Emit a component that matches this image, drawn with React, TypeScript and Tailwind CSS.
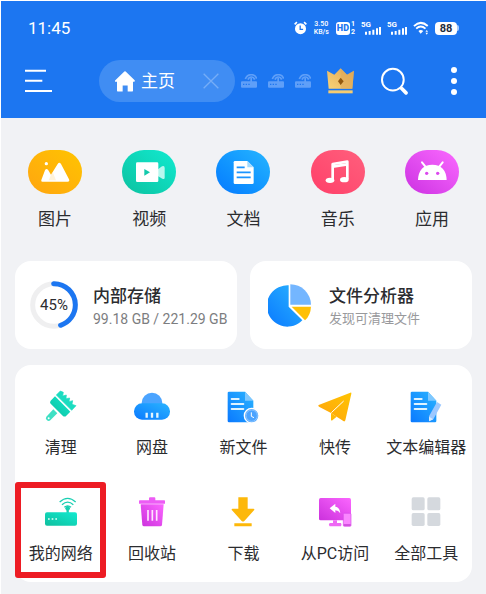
import type { ReactNode } from "react";

type ArtProps = { box: string; className: string; children: ReactNode };

function Art({ box, className, children }: ArtProps) {
  return (
    <svg viewBox={box} className={className} aria-hidden="true" fill="none">
      {children}
    </svg>
  );
}

function Gradients() {
  const stops: [string, string, string][] = [
    ["blue", "#0a79ff", "#2ab4ff"],
    ["teal", "#0fbf9e", "#12ead0"],
    ["amber", "#ffa30f", "#ffc400"],
    ["violet", "#cb31dc", "#fb66ff"],
    ["gold", "#f9d477", "#dea656"],
  ];
  return (
    <svg width="0" height="0" className="absolute" aria-hidden="true">
      <defs>
        {stops.map(([id, from, to]) => (
          <linearGradient key={id} id={id} x1="0" y1="1" x2="1" y2="0">
            <stop offset="0" stopColor={from} />
            <stop offset="1" stopColor={to} />
          </linearGradient>
        ))}
      </defs>
    </svg>
  );
}

function RouterTab() {
  return (
    <button aria-label="网络标签" className="text-[#5f9ff8]">
      <Art box="0 0 48 42" className="h-[14px] w-4">
        <path d="M3 22H28V12H33V22H45Q48 22 48 25V38Q48 41 45 41H3Q0 41 0 38V25Q0 22 3 22Z" fill="currentColor" />
        <path d="M13 15Q18 2 31 2Q43 2 47 14M21 17Q24 9 31 9Q38 9 41 17" stroke="currentColor" strokeWidth="5" />
        <path d="M6 31H10M14 31H18M22 31H26" stroke="#1c76f1" strokeWidth="4" />
      </Art>
    </button>
  );
}

function Signal() {
  return (
    <span className="flex h-[14px] w-5">
      <span className="text-[8px] leading-[8px] font-bold">5G</span>
      <Art box="0 0 48 42" className="-ml-[6px] h-[14px] w-4 shrink-0">
        <path d="M3 41V32M14 41V30M25 41V26M36 41V22M45 41V18" stroke="#fff" strokeWidth="6" />
      </Art>
    </span>
  );
}

function StatusBar() {
  return (
    <div className="flex h-[54px] items-center justify-between pr-[27px] pl-[27px]">
      <span className="text-[17px] leading-6">11:45</span>
      <div className="flex items-center gap-[6px]">
        <Art box="0 0 40 42" className="h-[14px] w-[13px]">
          <circle cx="20" cy="23" r="17" fill="#fff" />
          <path d="M2 10L9 3M31 3L38 10" stroke="#fff" strokeWidth="5" />
          <path d="M19 13V25H28" stroke="#1c76f1" strokeWidth="4" />
        </Art>
        <span className="flex w-[17px] flex-col items-center text-[7px] leading-[8px] font-medium">
          <span>3.50</span>
          <span>KB/s</span>
        </span>
        <span className="flex items-center gap-px">
          <span className="h-[13px] rounded-[3px] bg-white px-px text-[9px] leading-[13px] font-black text-[#1c76f1]">HD</span>
          <span className="flex flex-col text-[7px] leading-[8px] font-bold">
            <span>1</span>
            <span>2</span>
          </span>
        </span>
        <Signal />
        <Signal />
        <Art box="0 0 50 42" className="h-[14px] w-4">
          <path d="M3 15Q24 -5 46 15M10 23Q24 10 39 23" stroke="#fff" strokeWidth="6" />
          <path d="M17 30Q24 24 32 30L24 39Z" fill="#fff" />
          <path d="M39 33L43 27L47 33ZM39 36L43 42L47 36Z" fill="#fff" />
        </Art>
        <span className="flex items-center">
          <span className="h-[13px] w-[22px] rounded-[4px] bg-white text-center text-[11px] leading-[13px] font-bold text-[#1f2d40]">88</span>
          <span className="h-[6px] w-[2px] rounded-r-[2px] bg-[#a8cbfb]" />
        </span>
      </div>
    </div>
  );
}

function Toolbar() {
  return (
    <nav className="flex h-[52px] items-center justify-between pr-[29px] pl-6">
      <div className="flex items-center">
        <button aria-label="菜单">
          <Art box="75 208 81 72" className="h-6 w-[27px]">
            <path d="M75 213H138M75 243H127M75 274H156" stroke="#fff" strokeWidth="6" />
          </Art>
        </button>
        <div className="ml-[47px] flex h-[42px] w-[136px] items-center rounded-full bg-[#408df3] pr-4 pl-4">
          <Art box="343 211 60 62" className="h-[21px] w-5">
            <path d="M371 212Q373 210 375 212L402 238Q404 242 400 243H397V270Q397 272 395 272H381V254H366V272H351Q349 272 349 270V243H345Q341 242 344 238Z" fill="#fff" />
          </Art>
          <span className="ml-[6px] text-[17px] leading-6">主页</span>
          <button aria-label="关闭标签" className="ml-auto">
            <Art box="610 220 48 48" className="h-4 w-4">
              <path d="M612 222L656 266M656 222L612 266" stroke="#75adf7" strokeWidth="4" />
            </Art>
          </button>
        </div>
        <div className="ml-[6px] flex gap-[11px]">
          <RouterTab />
          <RouterTab />
          <RouterTab />
        </div>
      </div>
      <div className="flex items-center">
        <button aria-label="会员">
          <Art box="252 200 81 78" className="h-[26px] w-[27px]">
            <path d="M252 208L274 220L293 201L312 220L333 208L328 262H257Z" fill="url(#gold)" />
            <path d="M293 202L312 220L333 208L328 262H293Z" fill="#dfa858" opacity=".55" />
            <path d="M256 267H329V276H256Z" fill="#f6cc70" />
            <path d="M293 229L302 240L293 251L285 240Z" fill="#94590e" />
          </Art>
        </button>
        <button aria-label="搜索" className="ml-[27px]">
          <Art box="413 200 82 84" className="h-7 w-[27px]">
            <circle cx="449" cy="238" r="33" stroke="#fff" strokeWidth="6" />
            <path d="M472 261L477 266" stroke="#fff" strokeWidth="6" />
            <path d="M476 265L489 278" stroke="#fff" strokeWidth="11" strokeLinecap="round" />
          </Art>
        </button>
        <button aria-label="更多" className="ml-[43px] flex flex-col gap-[5px]">
          <span className="h-[6px] w-[6px] rounded-full bg-white" />
          <span className="h-[6px] w-[6px] rounded-full bg-white" />
          <span className="h-[6px] w-[6px] rounded-full bg-white" />
        </button>
      </div>
    </nav>
  );
}

const categories = [
  {
    label: "图片",
    fill: "from-[#ffa50f] to-[#ffc400]",
    box: "84 60 162 132",
    art: (
      <>
        <path d="M124 150L135 121Q139 113 145 121L153 134L173 102Q178 94 183 102L207 148Q210 155 203 155H127Q122 155 124 150Z" fill="#fff" />
        <path d="M153 134L158 126L168 151H146Z" fill="#ffe7b8" opacity=".5" />
        <circle cx="139" cy="101" r="5" fill="#fff" />
      </>
    ),
  },
  {
    label: "视频",
    fill: "from-[#0cc2a0] to-[#12ead0]",
    box: "366 60 162 132",
    art: (
      <>
        <path d="M472 119L486 109Q494 106 494 113V143Q494 149 487 146L472 137Z" fill="#b9f7ee" />
        <rect x="408" y="97" width="67" height="59" rx="4" fill="#fff" />
        <path d="M433 117L450 127L433 137Z" fill="#13c9ac" />
      </>
    ),
  },
  {
    label: "文档",
    fill: "from-[#0a79ff] to-[#27b5ff]",
    box: "649 60 162 132",
    art: (
      <>
        <path d="M706 93H743L762 112V158Q762 162 758 162H706Q702 162 702 158V97Q702 93 706 93Z" fill="#fff" />
        <path d="M743 93L762 112H743Z" fill="#a4dbff" />
        <path d="M711 112H735M711 127H753M711 142H753" stroke="#1b94ff" strokeWidth="5" />
      </>
    ),
  },
  {
    label: "音乐",
    fill: "from-[#ff3e69] to-[#ff5f7d]",
    box: "204 60 162 132",
    art: (
      <>
        <path d="M269 150V102L313 95V148" stroke="#fff" strokeWidth="8" strokeLinejoin="round" />
        <path d="M269 110L313 103" stroke="#fff" strokeWidth="8" />
        <ellipse cx="261" cy="151" rx="13" ry="8" fill="#fff" />
        <ellipse cx="304" cy="149" rx="13" ry="8" fill="#fff" />
      </>
    ),
  },
  {
    label: "应用",
    fill: "from-[#cc2fe2] to-[#fb68ff]",
    box: "486 60 162 132",
    art: (
      <>
        <path d="M525 150Q527 105 568 104Q609 105 611 150Z" fill="#fff" />
        <path d="M537 97L549 112M599 97L587 112" stroke="#fff" strokeWidth="6" strokeLinecap="round" />
        <circle cx="551" cy="130" r="5" fill="#db48ee" />
        <circle cx="584" cy="130" r="5" fill="#db48ee" />
      </>
    ),
  },
];

const doc = (
  <>
    <path d="M515 64H563L588 91V152Q588 156 584 156H515Q511 156 511 152V68Q511 64 515 64Z" fill="url(#blue)" />
    <path d="M563 64L588 91H563Z" fill="#7fc8ff" />
    <path d="M523 86H544M523 101H558M523 116H558" stroke="#dff3ff" strokeWidth="6" strokeLinecap="round" />
  </>
);

const tools = [
  {
    label: "清理",
    box: "132 50 108 108",
    art: (
      <>
        <path d="M163 114L175 126L154 147Q149 151 144 147Q138 142 142 136Z" fill="#3fe0c4" />
        <circle cx="149" cy="141" r="3" fill="#fff" />
        <path d="M168 75L214 121L202 133Q197 138 191 133L155 97Q151 92 155 88Z" fill="url(#teal)" />
        <path d="M172 71L184 59L193 63L191 74L202 71L201 82L212 80L210 91L221 88L219 99L231 103L218 117Z" fill="#1bdcc0" stroke="#1bdcc0" strokeLinejoin="round" strokeWidth="2" />
      </>
    ),
  },
  {
    label: "网盘",
    box: "402 53 108 108",
    art: (
      <>
        <circle cx="456" cy="98" r="31" fill="#4ba4ff" />
        <rect x="402" y="99" width="108" height="49" rx="24" fill="url(#blue)" />
        <path d="M440 127V142M456 127V142M472 127V142" stroke="#e4f5ff" strokeWidth="7" />
      </>
    ),
  },
  {
    label: "新文件",
    box: "503 53 108 108",
    art: (
      <>
        {doc}
        <circle cx="583" cy="136" r="22" fill="#55a9ff" stroke="#fff" strokeWidth="4" />
        <circle cx="583" cy="136" r="17" fill="#4ba3ff" stroke="#a6d3ff" strokeWidth="2" />
        <path d="M582 126V138L590 142" stroke="#fff" strokeWidth="3" />
      </>
    ),
  },
  {
    label: "快传",
    box: "222 56 108 108",
    art: (
      <>
        <path d="M227 107L322 70Q326 69 325 73L307 153Q305 158 301 155L281 142L264 131L228 112Q224 109 227 107Z" fill="url(#amber)" />
        <path d="M264 131V151Q265 156 269 152L281 142Z" fill="#ffba0a" />
        <path d="M302 95L265 130" stroke="#fff" strokeWidth="3" />
      </>
    ),
  },
  {
    label: "文本编辑器",
    box: "503 53 108 108",
    art: (
      <>
        {doc}
        <path d="M590 95L603 103L579 147L566 153V138Z" fill="#9dc8ff" />
        <path d="M566 139L579 147L566 153Z" fill="#d6ebff" />
      </>
    ),
  },
  {
    label: "我的网络",
    marked: true,
    box: "126 56 108 108",
    art: (
      <>
        <path d="M176 80Q200 58 224 80M183 88Q200 73 217 88M190 96Q200 87 210 96" stroke="#19cfb2" strokeWidth="4" />
        <circle cx="200" cy="99" r="7" fill="#19cfb2" />
        <path d="M200 99V114" stroke="#19cfb2" strokeWidth="7" />
        <rect x="132" y="111" width="96" height="40" rx="6" fill="url(#teal)" />
        <path d="M141 131H146M152 131H157M163 131H168" stroke="#e5fffa" strokeWidth="4" />
      </>
    ),
  },
  {
    label: "回收站",
    box: "402 56 108 108",
    art: (
      <>
        <path d="M419 75H447V69Q447 66 450 66H463Q466 66 466 69V75H493Q495 75 495 77V85H417V77Q417 75 419 75Z" fill="#ed5cf5" />
        <path d="M422 87H491L486 149Q485 153 481 153H432Q428 153 427 149Z" fill="url(#violet)" />
        <path d="M444 104V136M457 104V136M470 104V136" stroke="#ffe4ff" strokeWidth="5" />
      </>
    ),
  },
  {
    label: "下载",
    box: "677 56 108 108",
    art: (
      <path d="M717 66H745V100H763Q767 102 764 105L735 137Q731 140 727 137L698 105Q695 102 699 100H717ZM705 144H757V153H705Z" fill="#fdb80a" />
    ),
  },
  {
    label: "从PC访问",
    box: "222 56 108 108",
    art: (
      <>
        <rect x="228" y="68" width="96" height="67" rx="5" fill="url(#violet)" />
        <path d="M270 135H282V143H294Q297 148 294 153H260Q255 148 260 143H270Z" fill="#ee68f4" />
        <rect x="301" y="114" width="23" height="39" rx="3" fill="#fa86ff" stroke="#d84be8" strokeWidth="2" />
        <path d="M302 149H323" stroke="#c13bd0" strokeWidth="4" />
        <path d="M260 99L277 85V94Q290 95 292 114Q286 105 277 105V113Z" fill="#fff" />
      </>
    ),
  },
  {
    label: "全部工具",
    box: "497 56 108 108",
    art: (
      <g fill="#d5d9de">
        <rect x="508" y="66" width="39" height="39" rx="5" />
        <rect x="555" y="66" width="39" height="39" rx="5" />
        <rect x="508" y="113" width="39" height="39" rx="5" />
        <rect x="555" y="113" width="39" height="39" rx="5" />
      </g>
    ),
  },
];

export default function App() {
  return (
    <div className="min-h-screen bg-white pt-px pl-px font-['Roboto','Noto_Sans_CJK_SC',sans-serif] text-[#2b2c2f]">
      <Gradients />
      <header className="bg-[#1c76f1] pb-[11px] text-white">
        <StatusBar />
        <Toolbar />
      </header>
      <main className="bg-[#f1f2f5] pb-3">
        <section className="grid grid-cols-5 px-[7px] pt-8">
          {categories.map((c) => (
            <button key={c.label} className="flex flex-col items-center gap-[13px]">
              <span className={`h-11 w-[54px] rounded-full bg-linear-to-tr ${c.fill}`}>
                <Art box={c.box} className="h-11 w-[54px]">
                  {c.art}
                </Art>
              </span>
              <span className="text-[17px] leading-6">{c.label}</span>
            </button>
          ))}
        </section>

        <section className="mt-[30px] grid grid-cols-2 gap-[13px] px-[14px]">
          <button className="flex h-[88px] items-center rounded-2xl bg-white pl-[15px] text-left">
            <span className="relative flex h-12 w-12 shrink-0 items-center justify-center">
              <Art box="0 0 144 144" className="absolute inset-0 h-12 w-12">
                <circle cx="72" cy="72" r="64" stroke="#efeff0" strokeWidth="15" />
                <circle cx="72" cy="72" r="64" stroke="#1c76f1" strokeWidth="15" strokeLinecap="round" pathLength="100" strokeDasharray="45 55" transform="rotate(-1 72 72) rotate(-90 72 72)" />
              </Art>
              <span className="relative text-[15px] leading-5">45%</span>
            </span>
            <span className="ml-[15px] flex flex-col pt-[3px] whitespace-nowrap">
              <span className="text-[17px] leading-6 font-medium">内部存储</span>
              <span className="text-[14px] leading-[22px] text-[#7c7d80]">99.18 GB / 221.29 GB</span>
            </span>
          </button>
          <button className="flex h-[88px] items-center rounded-2xl bg-white pl-[18px] text-left">
            <Art box="75 100 132 129" className="h-[43px] w-11 shrink-0">
              <path d="M137 104V168L178 209A62 62 0 1 1 137 104Z" fill="url(#blue)" />
              <path d="M142 101A62 62 0 0 1 204 162H142Z" fill="#74b6ff" />
              <path d="M146 168H204Q203 193 186 209Z" fill="#ffc006" />
            </Art>
            <span className="ml-[17px] flex flex-col pt-[3px] whitespace-nowrap">
              <span className="text-[17px] leading-6 font-medium">文件分析器</span>
              <span className="text-[13px] leading-[22px] text-[#98999c]">发现可清理文件</span>
            </span>
          </button>
        </section>

        <section className="mx-[14px] mt-4 grid grid-cols-5 gap-y-[10px] rounded-2xl bg-white pt-[11px] pb-1">
          {tools.map((t) => (
            <button key={t.label} className="relative flex h-24 flex-col items-center gap-3 pt-3">
              <Art box={t.box} className="h-9 w-9 overflow-visible">
                {t.art}
              </Art>
              <span className="text-[16px] leading-6 whitespace-nowrap">{t.label}</span>
              {t.marked && <span className="absolute inset-0 rounded-[3px] border-6 border-[#ed1c24]" />}
            </button>
          ))}
        </section>
      </main>
    </div>
  );
}
